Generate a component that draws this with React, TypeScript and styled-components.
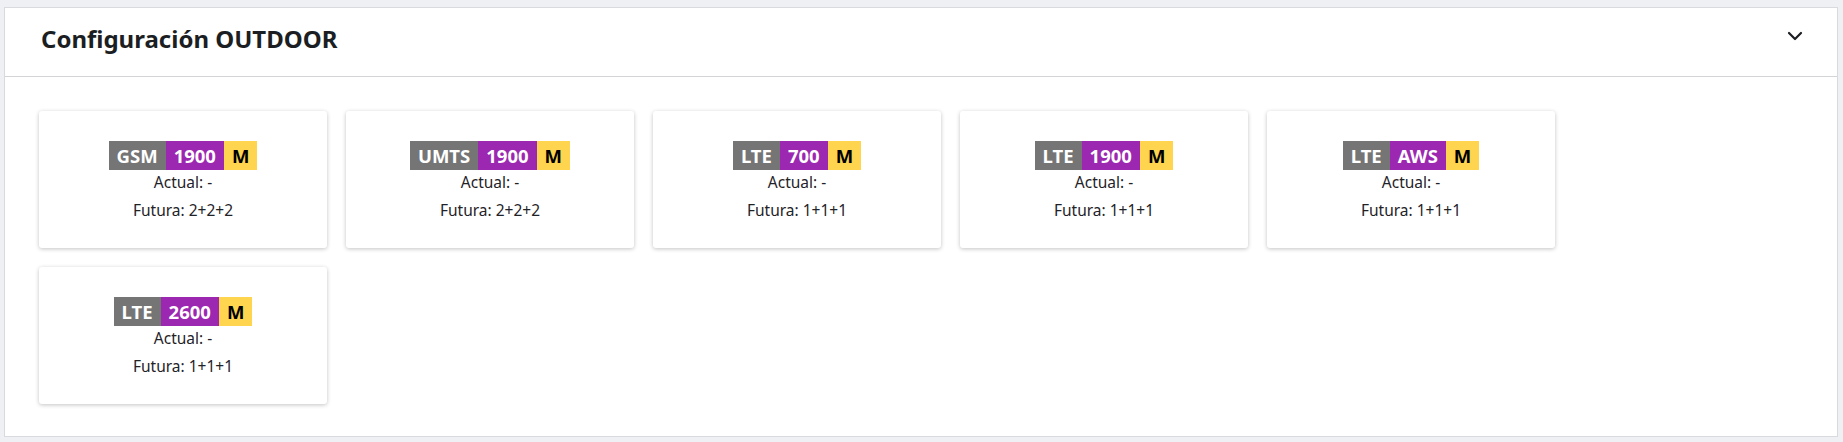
import styled, { createGlobalStyle } from 'styled-components'

const GlobalStyle = createGlobalStyle`
  html, body {
    margin: 0;
    padding: 0;
    background: #eff0f4;
  }
  body {
    font-family: 'Noto Sans', 'Open Sans', Arial, sans-serif;
    color: #1f2328;
  }
`

const Page = styled.div`
  padding: 7px 5px 4px 4px;
`

const Panel = styled.section`
  background: #ffffff;
  border: 1px solid #d9dadf;
`

const Header = styled.header`
  height: 69px;
  box-sizing: border-box;
  display: flex;
  align-items: center;
  justify-content: space-between;
  padding: 0 34px 8px 36px;
  border-bottom: 1px solid #d3d4d8;
`

const Title = styled.h2`
  margin: 0;
  font-size: 24px;
  font-weight: 700;
  color: #1b1e22;
`

const Toggle = styled.button`
  border: none;
  background: none;
  padding: 0;
  margin-bottom: 4px;
  display: flex;
  color: #1b1e22;
  cursor: pointer;
`

const Body = styled.div`
  display: flex;
  flex-wrap: wrap;
  gap: 19px;
  padding: 34px 34px 32px 34px;
  max-width: 1560px;
`

const Card = styled.div`
  width: 288px;
  height: 137px;
  box-sizing: border-box;
  padding-top: 30px;
  background: #ffffff;
  border-radius: 3px;
  box-shadow: 0 1px 4px rgba(0, 0, 0, 0.24);
  display: flex;
  flex-direction: column;
  align-items: center;
`

const Badge = styled.div`
  display: flex;
  height: 29px;
`

const Segment = styled.span<{ $bg: string; $fg: string }>`
  display: flex;
  align-items: center;
  padding: 0 8px;
  background: ${({ $bg }) => $bg};
  color: ${({ $fg }) => $fg};
  font-size: 18.5px;
  font-weight: 700;
`

const Line = styled.div<{ $gap?: number }>`
  font-size: 15.5px;
  line-height: 24px;
  margin-top: ${({ $gap }) => $gap ?? 0}px;
  color: #1f2328;
`

type Config = {
  tech: string
  band: string
  actual: string
  futura: string
}

const configs: Config[] = [
  { tech: 'GSM', band: '1900', actual: '-', futura: '2+2+2' },
  { tech: 'UMTS', band: '1900', actual: '-', futura: '2+2+2' },
  { tech: 'LTE', band: '700', actual: '-', futura: '1+1+1' },
  { tech: 'LTE', band: '1900', actual: '-', futura: '1+1+1' },
  { tech: 'LTE', band: 'AWS', actual: '-', futura: '1+1+1' },
  { tech: 'LTE', band: '2600', actual: '-', futura: '1+1+1' },
]

export default function App() {
  return (
    <Page>
      <GlobalStyle />
      <Panel>
        <Header>
          <Title>Configuración OUTDOOR</Title>
          <Toggle aria-label="Contraer">
            <svg width="16" height="10" viewBox="0 0 16 10" fill="none">
              <path d="M2 2l6 6 6-6" stroke="currentColor" strokeWidth="2.2" strokeLinecap="round" strokeLinejoin="round" />
            </svg>
          </Toggle>
        </Header>
        <Body>
          {configs.map((c, i) => (
            <Card key={i}>
              <Badge>
                <Segment $bg="#757575" $fg="#ffffff">{c.tech}</Segment>
                <Segment $bg="#9c27b0" $fg="#ffffff">{c.band}</Segment>
                <Segment $bg="#ffd54f" $fg="#000000">M</Segment>
              </Badge>
              <Line>Actual: {c.actual}</Line>
              <Line $gap={4}>Futura: {c.futura}</Line>
            </Card>
          ))}
        </Body>
      </Panel>
    </Page>
  )
}
